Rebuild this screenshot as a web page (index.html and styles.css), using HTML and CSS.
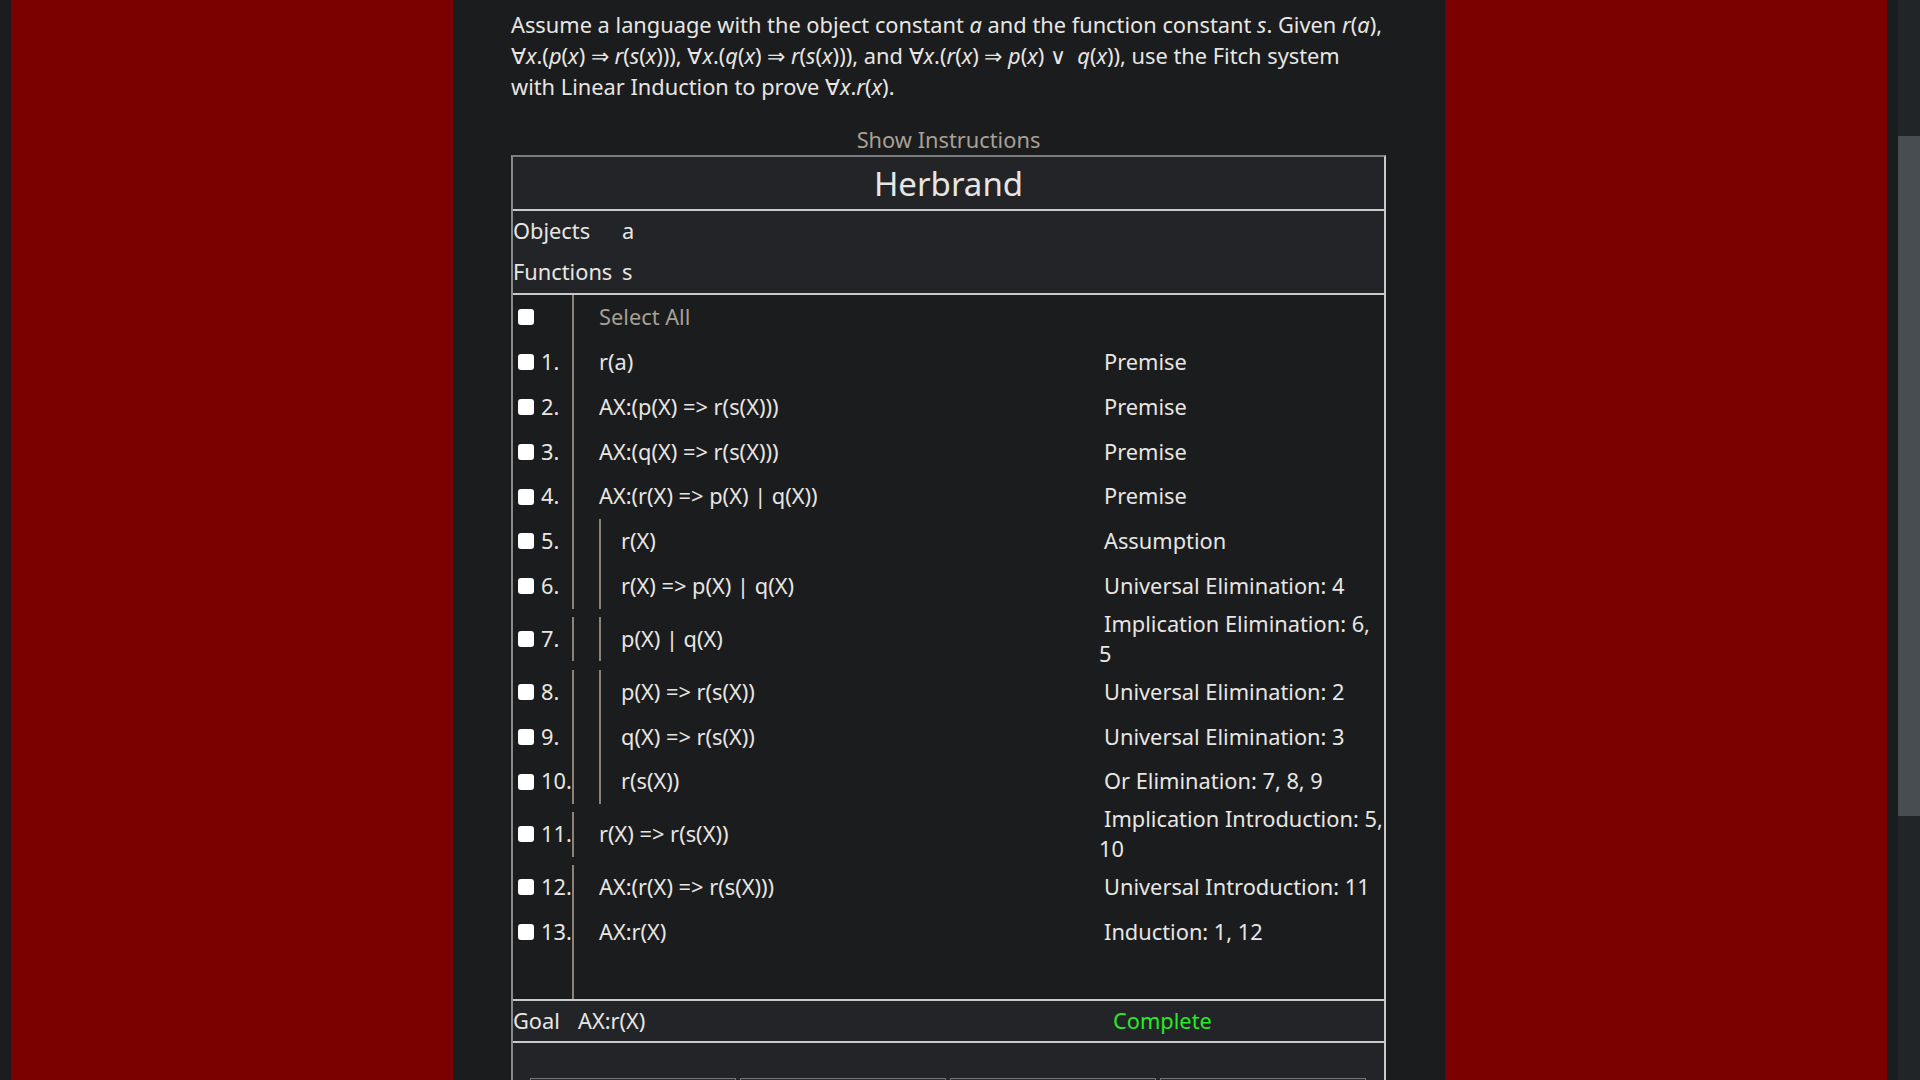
FILE: index.html
```html
<!DOCTYPE html>
<html lang="en">
<head>
<meta charset="utf-8">
<title>Herbrand</title>
<link rel="stylesheet" href="styles.css">
</head>
<body>
<div class="frame">
  <div class="edge"></div>
  <div class="side"></div>
  <main class="main">
    <p class="problem">Assume a language with the object constant <i>a</i> and the function constant <i>s</i>. Given <i>r</i>(<i>a</i>), ∀<i>x</i>.(<i>p</i>(<i>x</i>) ⇒ <i>r</i>(<i>s</i>(<i>x</i>))), ∀<i>x</i>.(<i>q</i>(<i>x</i>) ⇒ <i>r</i>(<i>s</i>(<i>x</i>))), and ∀<i>x</i>.(<i>r</i>(<i>x</i>) ⇒ <i>p</i>(<i>x</i>) ∨&nbsp; <i>q</i>(<i>x</i>)), use the Fitch system with Linear Induction to prove ∀<i>x</i>.<i>r</i>(<i>x</i>).</p>
    <div class="show">Show Instructions</div>
    <div class="table">
      <div class="title">Herbrand</div>
      <div class="lang">
        <div class="lang-row"><span class="lang-label">Objects</span><span>a</span></div>
        <div class="lang-row"><span class="lang-label">Functions</span><span>s</span></div>
      </div>
      <div class="proof">
        <div class="row">
          <div class="num"><span class="box"></span></div>
          <div class="formula"><span class="muted">Select All</span></div>
        </div>
        <div class="row">
          <div class="num"><span class="box"></span>1.</div>
          <div class="formula">r(a)</div>
          <div class="just">Premise</div>
        </div>
        <div class="row">
          <div class="num"><span class="box"></span>2.</div>
          <div class="formula">AX:(p(X) =&gt; r(s(X)))</div>
          <div class="just">Premise</div>
        </div>
        <div class="row">
          <div class="num"><span class="box"></span>3.</div>
          <div class="formula">AX:(q(X) =&gt; r(s(X)))</div>
          <div class="just">Premise</div>
        </div>
        <div class="row">
          <div class="num"><span class="box"></span>4.</div>
          <div class="formula">AX:(r(X) =&gt; p(X) | q(X))</div>
          <div class="just">Premise</div>
        </div>
        <div class="row">
          <div class="num"><span class="box"></span>5.</div>
          <div class="formula"><div class="sub">r(X)</div></div>
          <div class="just">Assumption</div>
        </div>
        <div class="row">
          <div class="num"><span class="box"></span>6.</div>
          <div class="formula"><div class="sub">r(X) =&gt; p(X) | q(X)</div></div>
          <div class="just">Universal Elimination: 4</div>
        </div>
        <div class="row">
          <div class="num"><span class="box"></span>7.</div>
          <div class="formula"><div class="sub">p(X) | q(X)</div></div>
          <div class="just">Implication Elimination: 6, 5</div>
        </div>
        <div class="row">
          <div class="num"><span class="box"></span>8.</div>
          <div class="formula"><div class="sub">p(X) =&gt; r(s(X))</div></div>
          <div class="just">Universal Elimination: 2</div>
        </div>
        <div class="row">
          <div class="num"><span class="box"></span>9.</div>
          <div class="formula"><div class="sub">q(X) =&gt; r(s(X))</div></div>
          <div class="just">Universal Elimination: 3</div>
        </div>
        <div class="row">
          <div class="num"><span class="box"></span>10.</div>
          <div class="formula"><div class="sub">r(s(X))</div></div>
          <div class="just">Or Elimination: 7, 8, 9</div>
        </div>
        <div class="row">
          <div class="num"><span class="box"></span>11.</div>
          <div class="formula">r(X) =&gt; r(s(X))</div>
          <div class="just">Implication Introduction: 5, 10</div>
        </div>
        <div class="row">
          <div class="num"><span class="box"></span>12.</div>
          <div class="formula">AX:(r(X) =&gt; r(s(X)))</div>
          <div class="just">Universal Introduction: 11</div>
        </div>
        <div class="row">
          <div class="num"><span class="box"></span>13.</div>
          <div class="formula">AX:r(X)</div>
          <div class="just">Induction: 1, 12</div>
        </div>
        <div class="row">
          <div class="num"></div>
        </div>
      </div>
      <div class="goal">
        <span>Goal</span>
        <span>AX:r(X)</span>
        <span class="complete">Complete</span>
      </div>
      <div class="actions">
        <button class="btn" type="button">Add</button>
        <button class="btn" type="button">Delete</button>
        <button class="btn" type="button">Undo</button>
        <button class="btn" type="button">Redo</button>
      </div>
    </div>
  </main>
  <div class="side"></div>
  <div class="edge"></div>
  <div class="scrollbar"><div class="thumb"></div></div>
</div>
</body>
</html>
```

FILE: styles.css
```css
html, body {
  margin: 0;
  height: 100%;
  overflow: hidden;
}

body {
  background: #1b1c1e;
  color: #e8e6e3;
  font-family: "Noto Sans", "Open Sans", sans-serif;
  font-size: 21.8px;
  line-height: 30.5px;
}

.frame {
  display: flex;
  height: 100vh;
}

.edge {
  width: 11px;
  flex: 0 0 11px;
  background: #1b1c1e;
}

.side {
  width: 442px;
  flex: 0 0 442px;
  background: #7b0000;
}

.main {
  width: 992px;
  flex: 0 0 992px;
  box-sizing: border-box;
  padding: 9px 59px 0 58px;
  background: #1b1c1e;
}

.scrollbar {
  width: 22px;
  flex: 0 0 22px;
  background: #212527;
  padding-top: 136px;
  box-sizing: border-box;
}

.thumb {
  height: 680px;
  background: #474d50;
}

.problem {
  margin: 0 0 22.5px;
  line-height: 31px;
}

.problem i {
  font-style: italic;
}

.show {
  text-align: center;
  color: #a8a095;
}

.table {
  border: 2px solid #c9c9c9;
  border-top-color: #7c7c7c;
  border-left-color: #8a8a8a;
}

.title {
  height: 52px;
  line-height: 54px;
  text-align: center;
  font-size: 33px;
  background: #232427;
  border-bottom: 2px solid #c9c9c9;
}

.lang {
  background: #232427;
  border-bottom: 2px solid #c9c9c9;
}

.lang-row {
  height: 41px;
  display: flex;
  align-items: center;
}

.lang-label {
  width: 109px;
}

.proof {
  background: #1b1c1e;
}

.row {
  display: flex;
  align-items: center;
  min-height: 44.8px;
}

.num {
  box-sizing: border-box;
  width: 61px;
  flex: 0 0 61px;
  height: 44.8px;
  padding-left: 5px;
  display: flex;
  align-items: center;
  border-right: 2px solid #8c8278;
  white-space: nowrap;
}

.box {
  width: 16px;
  height: 16px;
  flex: 0 0 16px;
  background: #ffffff;
  border-radius: 3px;
  margin-right: 7px;
}

.formula {
  box-sizing: border-box;
  width: 525px;
  flex: 0 0 525px;
  height: 44.8px;
  padding-left: 25px;
  display: flex;
  align-items: center;
}

.sub {
  align-self: stretch;
  display: flex;
  align-items: center;
  border-left: 2px solid #8c8278;
  padding-left: 20px;
}

.muted {
  color: #a8a095;
}

.just {
  flex: 1;
  text-indent: 5px;
}

.goal {
  display: grid;
  grid-template-columns: 65px 535px auto;
  align-items: center;
  height: 40px;
  background: #232427;
  border-top: 2px solid #c9c9c9;
  border-bottom: 2px solid #c9c9c9;
}

.complete {
  color: #26ea26;
}

.actions {
  display: flex;
  gap: 4px;
  padding: 35px 0 20px 17px;
  background: #232427;
}

.btn {
  width: 206px;
  height: 40px;
  background: #2b2d30;
  border: 1px solid #747474;
  color: #e8e6e3;
  font-family: inherit;
  font-size: 18px;
}
```
